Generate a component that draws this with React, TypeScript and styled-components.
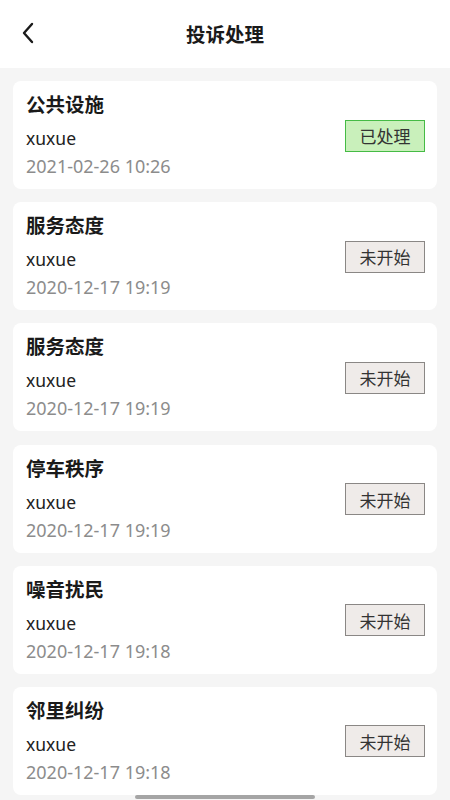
import React from "react";
import styled, { createGlobalStyle } from "styled-components";

const Global = createGlobalStyle`
  html, body { margin: 0; padding: 0; }
  body {
    background: #f5f5f5;
    font-family: "Noto Sans", "Noto Sans CJK SC", sans-serif;
  }
`;

const Page = styled.div`
  width: 450px;
  height: 800px;
  background: #f5f5f5;
  display: flex;
  flex-direction: column;
  position: relative;
  overflow: hidden;
`;

const Header = styled.div`
  height: 68px;
  background: #ffffff;
  display: grid;
  grid-template-columns: 60px 1fr 60px;
  align-items: center;
  flex-shrink: 0;
`;

const BackBtn = styled.div`
  display: flex;
  align-items: center;
  padding-left: 21px;
  padding-bottom: 2px;
`;

const Title = styled.div`
  text-align: center;
  font-size: 19.5px;
  font-weight: 700;
  color: #1a1a1a;
  padding-bottom: 1px;
`;

const List = styled.div`
  display: flex;
  flex-direction: column;
  gap: 13.2px;
  padding: 13px 13px 0;
`;

const Card = styled.div`
  background: #ffffff;
  border-radius: 8px;
  height: 108px;
  box-sizing: border-box;
  padding: 11px 12px 0 13px;
  display: flex;
  align-items: center;
  justify-content: space-between;
  flex-shrink: 0;
`;

const Info = styled.div`
  display: flex;
  flex-direction: column;
  align-self: flex-start;
`;

const CardTitle = styled.div`
  font-size: 19.5px;
  line-height: 26px;
  font-weight: 700;
  color: #1a1a1a;
`;

const Name = styled.div`
  font-size: 17.5px;
  line-height: 30px;
  margin-top: 5px;
  color: #222;
`;

const Time = styled.div`
  font-size: 18px;
  line-height: 28px;
  margin-top: -1px;
  color: #8c8c8c;
`;

const Badge = styled.div<{ $done: boolean }>`
  width: 80px;
  height: 32px;
  box-sizing: border-box;
  display: flex;
  align-items: center;
  justify-content: center;
  font-size: 17px;
  color: #333;
  margin-top: -10px;
  background: ${(p) => (p.$done ? "#c9f0bb" : "#efebe9")};
  border: 1px solid ${(p) => (p.$done ? "#45bb45" : "#8a8785")};
`;

const HomeBar = styled.div`
  position: absolute;
  left: 135px;
  bottom: 1px;
  width: 180px;
  height: 4px;
  border-radius: 2px;
  background: #a5a5a5;
`;

const items = [
  { t: "公共设施", d: "2021-02-26 10:26", done: true },
  { t: "服务态度", d: "2020-12-17 19:19", done: false },
  { t: "服务态度", d: "2020-12-17 19:19", done: false },
  { t: "停车秩序", d: "2020-12-17 19:19", done: false },
  { t: "噪音扰民", d: "2020-12-17 19:18", done: false },
  { t: "邻里纠纷", d: "2020-12-17 19:18", done: false },
];

export default function App() {
  return (
    <Page>
      <Global />
      <Header>
        <BackBtn>
          <svg width="14" height="22" viewBox="0 0 14 22">
            <path d="M11 2 L3 11 L11 20" fill="none" stroke="#1a1a1a" strokeWidth="2.4" strokeLinecap="round" strokeLinejoin="round" />
          </svg>
        </BackBtn>
        <Title>投诉处理</Title>
        <div />
      </Header>
      <List>
        {items.map((it, i) => (
          <Card key={i}>
            <Info>
              <CardTitle>{it.t}</CardTitle>
              <Name>xuxue</Name>
              <Time>{it.d}</Time>
            </Info>
            <Badge $done={it.done}>{it.done ? "已处理" : "未开始"}</Badge>
          </Card>
        ))}
      </List>
      <HomeBar />
    </Page>
  );
}
